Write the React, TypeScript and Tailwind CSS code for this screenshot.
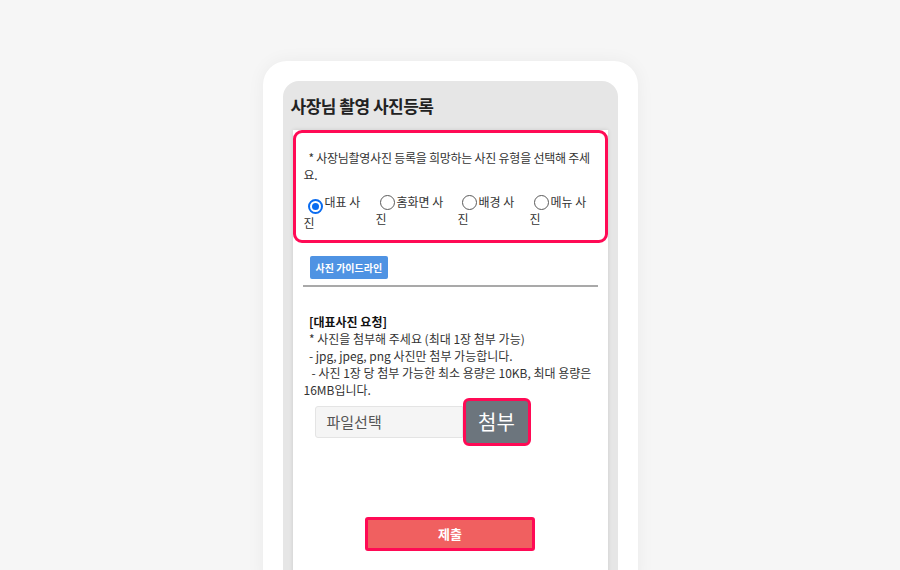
import React from "react";

const font = { fontFamily: '"Noto Sans CJK KR", "Noto Sans", sans-serif' };

function Radio({ checked }: { checked?: boolean }) {
  if (checked) {
    return (
      <span className="inline-flex items-center justify-center w-[15px] h-[15px] rounded-full border-2 border-[#0a6cf0] bg-white align-[-3px] mr-[2px]">
        <span className="w-[7px] h-[7px] rounded-full bg-[#0a6cf0]" />
      </span>
    );
  }
  return (
    <span className="inline-block w-[15px] h-[15px] rounded-full border border-[#5a5a5a] bg-white align-[-3px] mr-[2px]" />
  );
}

const options = [
  { first: "대표 사", w: "w-[72px]", checked: true },
  { first: "홈화면 사", w: "w-[82px]" },
  { first: "배경 사", w: "w-[72px]" },
  { first: "메뉴 사", w: "w-[66px]" },
];

export default function App() {
  return (
    <div className="w-[900px] h-[570px] overflow-hidden bg-[#f6f6f6]" style={font}>
      <div className="mx-auto mt-[61px] w-[375px] h-[540px] rounded-[24px] bg-white px-[20px] pt-[20px] shadow-[0_0_18px_rgba(0,0,0,0.05)]">
        <div className="h-full rounded-t-[16px] bg-[#e6e6e6] px-[10px]">
          <div className="h-[49px] flex items-center">
            <h1 className="text-[17px] font-bold text-[#222] tracking-[-0.5px] ml-[-2px]">
              사장님 촬영 사진등록
            </h1>
          </div>
          <div className="bg-white h-[460px] shadow-[0_0_4px_rgba(0,0,0,0.12)]">
            <div className="border-[3px] border-[#ff0a55] rounded-[9px] h-[113px] pl-[8px] pr-[8px] pt-[16px] text-[12px] leading-[17px] text-[#333]">
              <p className="whitespace-pre-wrap tracking-[-0.25px]">{"  * 사장님촬영사진 등록을 희망하는 사진 유형을 선택해 주세요."}</p>
              <div className="flex mt-[10px]">
                {options.map((o) => (
                  <div key={o.first} className={`${o.w} shrink-0`}>
                    <div className="pl-[4px]">
                      <Radio checked={o.checked} />
                      {o.first}
                    </div>
                    <div>진</div>
                  </div>
                ))}
              </div>
            </div>

            <div className="flex pl-[17px] pt-[13px]">
              <button className="h-[23px] px-[6px] rounded-[2px] bg-[#4f93e3] text-white text-[10px] leading-[23px] font-bold">
                사진 가이드라인
              </button>
            </div>
            <div className="mx-[10px] mt-[6px] border-t-2 border-[#a9a9a9]" />

            <div className="pl-[11px] pr-[14px] pt-[26px] text-[12px] leading-[17px] text-[#333]">
              <p className="whitespace-pre-wrap font-bold text-[#111]">{"  [대표사진 요청]"}</p>
              <p className="whitespace-pre-wrap">{"  * 사진을 첨부해 주세요 (최대 1장 첨부 가능)"}</p>
              <p className="whitespace-pre-wrap">{"  - jpg, jpeg, png 사진만 첨부 가능합니다."}</p>
              <p className="whitespace-pre-wrap">{"   - 사진 1장 당 첨부 가능한 최소 용량은 10KB, 최대 용량은 16MB입니다."}</p>
            </div>

            <div className="flex items-center pl-[22px]">
              <div className="w-[148px] h-[32px] bg-[#f5f5f5] border border-[#e4e4e4] rounded-l-[3px] flex items-center pl-[11px] text-[15px] text-[#555]">
                파일선택
              </div>
              <button className="w-[68px] h-[48px] border-[3px] border-[#ff0a55] rounded-[6px] bg-[#6c757d] text-white text-[20px]">
                첨부
              </button>
            </div>

            <div className="flex justify-center mt-[71px]">
              <button className="w-[170px] h-[34px] border-[3px] border-[#ff0a55] rounded-[3px] bg-[#f06060] text-white text-[13px] font-bold">
                제출
              </button>
            </div>
          </div>
        </div>
      </div>
    </div>
  );
}
